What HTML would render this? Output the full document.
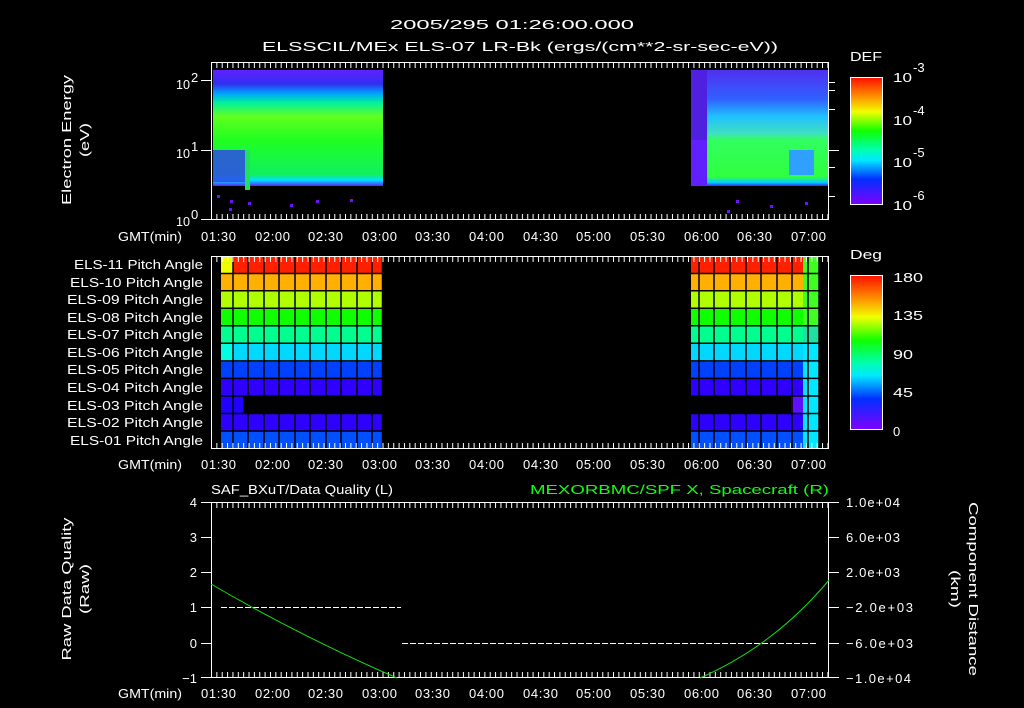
<!DOCTYPE html>
<html><head><meta charset="utf-8"><style>
html,body{margin:0;padding:0;background:#000;width:1024px;height:708px;overflow:hidden}
svg{display:block}
text{font-family:"Liberation Sans",sans-serif;fill:#fff;font-size:13px}
</style></head><body>
<svg width="1024" height="708" viewBox="0 0 1024 708">
<defs>
<linearGradient id="rb" x1="0" y1="0" x2="0" y2="1">
<stop offset="0" stop-color="#ff1000"/><stop offset="0.15" stop-color="#ff9000"/><stop offset="0.27" stop-color="#f0ff00"/><stop offset="0.42" stop-color="#10ff00"/><stop offset="0.57" stop-color="#00ffb0"/><stop offset="0.65" stop-color="#00e8ff"/><stop offset="0.8" stop-color="#0030ff"/><stop offset="1" stop-color="#8000ff"/>
</linearGradient>
<linearGradient id="sp1" x1="0" y1="0" x2="0" y2="1">
<stop offset="0" stop-color="#6020ff"/><stop offset="0.12" stop-color="#3030f0"/><stop offset="0.2" stop-color="#00a0ff"/><stop offset="0.28" stop-color="#00f0a0"/><stop offset="0.4" stop-color="#60ff20"/><stop offset="0.6" stop-color="#20ff20"/><stop offset="0.9" stop-color="#10f060"/><stop offset="0.95" stop-color="#00e0ff"/><stop offset="1" stop-color="#6020ff"/>
</linearGradient>
<linearGradient id="sp2" x1="0" y1="0" x2="0" y2="1">
<stop offset="0" stop-color="#5030f0"/><stop offset="0.25" stop-color="#3060ff"/><stop offset="0.4" stop-color="#20c0ff"/><stop offset="0.55" stop-color="#40e0c0"/><stop offset="0.6" stop-color="#30ff60"/><stop offset="0.92" stop-color="#30ff40"/><stop offset="0.97" stop-color="#00d0ff"/><stop offset="1" stop-color="#4020ff"/>
</linearGradient>
<pattern id="tk" x="211" y="0" width="5.36" height="10" patternUnits="userSpaceOnUse"><rect x="0" y="0" width="1" height="10" fill="#fff"/></pattern>
</defs>

<text x="390" y="29" font-size="15" textLength="244" lengthAdjust="spacingAndGlyphs">2005/295 01:26:00.000</text>
<text x="262" y="51" font-size="15" textLength="516" lengthAdjust="spacingAndGlyphs">ELSSCIL/MEx ELS-07 LR-Bk  (ergs/(cm**2-sr-sec-eV))</text>

<!-- Panel 1 -->
<rect x="213" y="70" width="170" height="116" fill="url(#sp1)"/>
<rect x="245" y="150" width="5" height="40" fill="#20e060"/>
<rect x="213" y="150" width="32" height="32" fill="#3040f0" opacity="0.8"/>
<rect x="691" y="70" width="16" height="70" fill="#5020e0"/>
<rect x="707" y="70" width="122" height="116" fill="url(#sp2)"/>
<rect x="691" y="140" width="16" height="46" fill="#6020ff"/>
<rect x="789" y="150" width="25" height="25" fill="#30a0ff"/>
<g fill="#7010ff"><rect x="217" y="195" width="3" height="3"/><rect x="230" y="200" width="3" height="3"/><rect x="248" y="202" width="3" height="3"/><rect x="290" y="204" width="3" height="3"/><rect x="316" y="200" width="3" height="3"/><rect x="350" y="199" width="3" height="3"/><rect x="229" y="208" width="3" height="3"/><rect x="736" y="200" width="3" height="3"/><rect x="770" y="205" width="3" height="3"/><rect x="805" y="202" width="3" height="3"/><rect x="727" y="210" width="3" height="3"/></g>
<rect x="211.5" y="62.5" width="617" height="157" fill="none" stroke="#fff"/>
<rect x="212" y="63" width="616" height="5" fill="url(#tk)"/>
<rect x="212" y="214" width="616" height="5" fill="url(#tk)"/>
<g fill="#fff"><rect x="201" y="80" width="10" height="1"/><rect x="201" y="150" width="10" height="1"/><rect x="201" y="219" width="10" height="1"/>
<rect x="829" y="82" width="6" height="1"/><rect x="829" y="90" width="6" height="1"/><rect x="829" y="109" width="6" height="1"/><rect x="829" y="150" width="10" height="1"/><rect x="829" y="167" width="6" height="1"/><rect x="829" y="196" width="6" height="1"/></g>
<text x="176" y="89" font-size="14" textLength="14" lengthAdjust="spacingAndGlyphs">10</text><text x="191" y="82" font-size="9">2</text>
<text x="176" y="158" font-size="14" textLength="14" lengthAdjust="spacingAndGlyphs">10</text><text x="191" y="151" font-size="9">1</text>
<text x="176" y="226" font-size="14" textLength="14" lengthAdjust="spacingAndGlyphs">10</text><text x="191" y="219" font-size="9">0</text>
<text transform="translate(71,140) rotate(-90)" text-anchor="middle" font-size="15" textLength="130" lengthAdjust="spacingAndGlyphs">Electron Energy</text>
<text transform="translate(89,140) rotate(-90)" text-anchor="middle" font-size="15" textLength="34" lengthAdjust="spacingAndGlyphs">(eV)</text>
<g font-size="14"><text x="118" y="241" textLength="64" lengthAdjust="spacingAndGlyphs">GMT(min)</text>
<text x="201" y="241" textLength="35">01:30</text><text x="255" y="241" textLength="35">02:00</text><text x="308" y="241" textLength="35">02:30</text><text x="362" y="241" textLength="35">03:00</text><text x="415" y="241" textLength="35">03:30</text><text x="469" y="241" textLength="35">04:00</text><text x="523" y="241" textLength="35">04:30</text><text x="576" y="241" textLength="35">05:00</text><text x="630" y="241" textLength="35">05:30</text><text x="684" y="241" textLength="35">06:00</text><text x="737" y="241" textLength="35">06:30</text><text x="791" y="241" textLength="35">07:00</text></g>
<text x="850" y="61" font-size="16" textLength="32" lengthAdjust="spacingAndGlyphs">DEF</text>
<rect x="850.5" y="77.5" width="32" height="127" fill="url(#rb)" stroke="#fff"/>
<g font-size="17"><text x="893" y="82" textLength="19" lengthAdjust="spacingAndGlyphs">10</text><text x="893" y="125" textLength="19" lengthAdjust="spacingAndGlyphs">10</text><text x="893" y="167" textLength="19" lengthAdjust="spacingAndGlyphs">10</text><text x="893" y="210" textLength="19" lengthAdjust="spacingAndGlyphs">10</text></g>
<g font-size="11"><text x="913" y="72">-3</text><text x="913" y="115">-4</text><text x="913" y="157">-5</text><text x="913" y="200">-6</text></g>

<!-- Panel 2 -->
<g>
<rect x="221" y="256" width="161" height="17" fill="#ff2000"/>
<rect x="221" y="274" width="161" height="17" fill="#ffb000"/>
<rect x="221" y="291" width="161" height="17" fill="#b0ff00"/>
<rect x="221" y="309" width="161" height="17" fill="#10ff00"/>
<rect x="221" y="326" width="161" height="17" fill="#00ff90"/>
<rect x="221" y="344" width="161" height="17" fill="#00d8ff"/>
<rect x="221" y="361" width="161" height="17" fill="#0040ff"/>
<rect x="221" y="379" width="161" height="17" fill="#3000ff"/>
<rect x="221" y="396" width="22" height="17" fill="#2000ff"/>
<rect x="221" y="414" width="161" height="17" fill="#3000ff"/>
<rect x="221" y="431" width="161" height="18" fill="#0050ff"/>
<rect x="221" y="256" width="12" height="17" fill="#f0ff00"/>
<rect x="221" y="344" width="12" height="17" fill="#00ffe0"/>
<rect x="691" y="256" width="128" height="17" fill="#ff2000"/>
<rect x="691" y="274" width="128" height="17" fill="#ffb000"/>
<rect x="691" y="291" width="128" height="17" fill="#b0ff00"/>
<rect x="691" y="309" width="128" height="17" fill="#10ff00"/>
<rect x="691" y="326" width="128" height="17" fill="#00ff90"/>
<rect x="691" y="344" width="128" height="17" fill="#00d8ff"/>
<rect x="691" y="361" width="128" height="17" fill="#0040ff"/>
<rect x="691" y="379" width="128" height="17" fill="#3000ff"/>
<rect x="791" y="396" width="28" height="17" fill="#6010ff"/>
<rect x="691" y="414" width="128" height="17" fill="#3000ff"/>
<rect x="691" y="431" width="128" height="18" fill="#0050ff"/>
<rect x="803" y="256" width="16" height="193" fill="#20e0a0"/>
<rect x="803" y="256" width="16" height="70" fill="#40ff20"/>
<rect x="803" y="344" width="16" height="105" fill="#00e8ff"/>
</g>
<g stroke="#000" stroke-width="1.5">
<line x1="211" y1="273.5" x2="829" y2="273.5"/><line x1="211" y1="290.7" x2="829" y2="290.7"/><line x1="211" y1="308.2" x2="829" y2="308.2"/><line x1="211" y1="325.8" x2="829" y2="325.8"/><line x1="211" y1="343.3" x2="829" y2="343.3"/><line x1="211" y1="360.9" x2="829" y2="360.9"/><line x1="211" y1="378.4" x2="829" y2="378.4"/><line x1="211" y1="396" x2="829" y2="396"/><line x1="211" y1="413.5" x2="829" y2="413.5"/><line x1="211" y1="431" x2="829" y2="431"/>
<line x1="233" y1="256" x2="233" y2="449"/><line x1="248" y1="256" x2="248" y2="449"/><line x1="264" y1="256" x2="264" y2="449"/><line x1="279" y1="256" x2="279" y2="449"/><line x1="295" y1="256" x2="295" y2="449"/><line x1="310" y1="256" x2="310" y2="449"/><line x1="326" y1="256" x2="326" y2="449"/><line x1="341" y1="256" x2="341" y2="449"/><line x1="357" y1="256" x2="357" y2="449"/><line x1="372" y1="256" x2="372" y2="449"/><line x1="382.5" y1="256" x2="382.5" y2="449"/>
<line x1="699" y1="256" x2="699" y2="449"/><line x1="714" y1="256" x2="714" y2="449"/><line x1="730" y1="256" x2="730" y2="449"/><line x1="746" y1="256" x2="746" y2="449"/><line x1="761" y1="256" x2="761" y2="449"/><line x1="777" y1="256" x2="777" y2="449"/><line x1="792" y1="256" x2="792" y2="449"/><line x1="808" y1="256" x2="808" y2="449"/><line x1="819" y1="256" x2="819" y2="449"/>
</g>
<rect x="211.5" y="256.5" width="617" height="192" fill="none" stroke="#fff"/>
<rect x="212" y="257" width="616" height="5" fill="url(#tk)"/>
<rect x="212" y="443" width="616" height="5" fill="url(#tk)"/>
<g font-size="14">
<text x="74" y="269" textLength="129" lengthAdjust="spacingAndGlyphs">ELS-11 Pitch Angle</text><text x="70" y="287" textLength="133" lengthAdjust="spacingAndGlyphs">ELS-10 Pitch Angle</text><text x="67" y="304" textLength="136" lengthAdjust="spacingAndGlyphs">ELS-09 Pitch Angle</text><text x="67" y="322" textLength="136" lengthAdjust="spacingAndGlyphs">ELS-08 Pitch Angle</text><text x="67" y="339" textLength="136" lengthAdjust="spacingAndGlyphs">ELS-07 Pitch Angle</text><text x="67" y="357" textLength="136" lengthAdjust="spacingAndGlyphs">ELS-06 Pitch Angle</text><text x="67" y="374" textLength="136" lengthAdjust="spacingAndGlyphs">ELS-05 Pitch Angle</text><text x="67" y="392" textLength="136" lengthAdjust="spacingAndGlyphs">ELS-04 Pitch Angle</text><text x="67" y="410" textLength="136" lengthAdjust="spacingAndGlyphs">ELS-03 Pitch Angle</text><text x="67" y="427" textLength="136" lengthAdjust="spacingAndGlyphs">ELS-02 Pitch Angle</text><text x="70" y="445" textLength="133" lengthAdjust="spacingAndGlyphs">ELS-01 Pitch Angle</text></g>
<g font-size="14"><text x="118" y="469" textLength="64" lengthAdjust="spacingAndGlyphs">GMT(min)</text>
<text x="201" y="469" textLength="35">01:30</text><text x="255" y="469" textLength="35">02:00</text><text x="308" y="469" textLength="35">02:30</text><text x="362" y="469" textLength="35">03:00</text><text x="415" y="469" textLength="35">03:30</text><text x="469" y="469" textLength="35">04:00</text><text x="523" y="469" textLength="35">04:30</text><text x="576" y="469" textLength="35">05:00</text><text x="630" y="469" textLength="35">05:30</text><text x="684" y="469" textLength="35">06:00</text><text x="737" y="469" textLength="35">06:30</text><text x="791" y="469" textLength="35">07:00</text></g>
<text x="850" y="259" font-size="16" textLength="32" lengthAdjust="spacingAndGlyphs">Deg</text>
<rect x="850.5" y="275.5" width="32" height="154" fill="url(#rb)" stroke="#fff"/>
<g font-size="17"><text x="893" y="282" textLength="30" lengthAdjust="spacingAndGlyphs">180</text><text x="893" y="320" textLength="30" lengthAdjust="spacingAndGlyphs">135</text><text x="893" y="359" textLength="20" lengthAdjust="spacingAndGlyphs">90</text><text x="893" y="397" textLength="20" lengthAdjust="spacingAndGlyphs">45</text><text x="893" y="436">0</text></g>

<!-- Panel 3 -->
<text x="211" y="494" font-size="15" textLength="182" lengthAdjust="spacingAndGlyphs">SAF_BXuT/Data Quality (L)</text>
<text x="530" y="494" font-size="15" textLength="299" lengthAdjust="spacingAndGlyphs" style="fill:#10ff10">MEXORBMC/SPF X, Spacecraft (R)</text>
<rect x="211.5" y="502.5" width="617" height="175" fill="none" stroke="#fff"/>
<rect x="212" y="503" width="616" height="5" fill="url(#tk)"/>
<rect x="212" y="672" width="616" height="5" fill="url(#tk)"/>
<g fill="#fff"><rect x="201" y="502" width="10" height="1"/><rect x="201" y="537" width="10" height="1"/><rect x="201" y="572" width="10" height="1"/><rect x="201" y="607" width="10" height="1"/><rect x="201" y="643" width="10" height="1"/><rect x="201" y="677" width="10" height="1"/>
<rect x="829" y="502" width="10" height="1"/><rect x="829" y="537" width="10" height="1"/><rect x="829" y="572" width="10" height="1"/><rect x="829" y="607" width="10" height="1"/><rect x="829" y="643" width="10" height="1"/><rect x="829" y="677" width="10" height="1"/></g>
<g font-size="14" text-anchor="end"><text x="197" y="507">4</text><text x="197" y="542">3</text><text x="197" y="577">2</text><text x="197" y="612">1</text><text x="197" y="648">0</text><text x="197" y="683">−1</text></g>
<g font-size="14"><text x="846" y="507" textLength="54">1.0e+04</text><text x="846" y="542" textLength="54">6.0e+03</text><text x="846" y="577" textLength="54">2.0e+03</text><text x="846" y="612" textLength="67">−2.0e+03</text><text x="846" y="648" textLength="67">−6.0e+03</text><text x="846" y="683" textLength="65">−1.0e+04</text></g>
<line x1="221" y1="607.5" x2="401" y2="607.5" stroke="#fff" stroke-dasharray="6,2"/>
<line x1="402" y1="643.5" x2="817" y2="643.5" stroke="#fff" stroke-dasharray="6,2"/>
<path d="M211,584 Q300,636 397,678" fill="none" stroke="#10e010" stroke-width="1"/>
<path d="M700,678 Q775,645 829,580" fill="none" stroke="#10e010" stroke-width="1"/>
<text transform="translate(71,589) rotate(-90)" text-anchor="middle" font-size="15" textLength="143" lengthAdjust="spacingAndGlyphs">Raw Data Quality</text>
<text transform="translate(89,589) rotate(-90)" text-anchor="middle" font-size="15" textLength="50" lengthAdjust="spacingAndGlyphs">(Raw)</text>
<text transform="translate(969,589) rotate(90)" text-anchor="middle" font-size="15" textLength="174" lengthAdjust="spacingAndGlyphs">Component Distance</text>
<text transform="translate(951,589) rotate(90)" text-anchor="middle" font-size="15" textLength="38" lengthAdjust="spacingAndGlyphs">(km)</text>
<g font-size="14"><text x="118" y="698" textLength="64" lengthAdjust="spacingAndGlyphs">GMT(min)</text>
<text x="201" y="698" textLength="35">01:30</text><text x="255" y="698" textLength="35">02:00</text><text x="308" y="698" textLength="35">02:30</text><text x="362" y="698" textLength="35">03:00</text><text x="415" y="698" textLength="35">03:30</text><text x="469" y="698" textLength="35">04:00</text><text x="523" y="698" textLength="35">04:30</text><text x="576" y="698" textLength="35">05:00</text><text x="630" y="698" textLength="35">05:30</text><text x="684" y="698" textLength="35">06:00</text><text x="737" y="698" textLength="35">06:30</text><text x="791" y="698" textLength="35">07:00</text></g>
</svg>
</body></html>
